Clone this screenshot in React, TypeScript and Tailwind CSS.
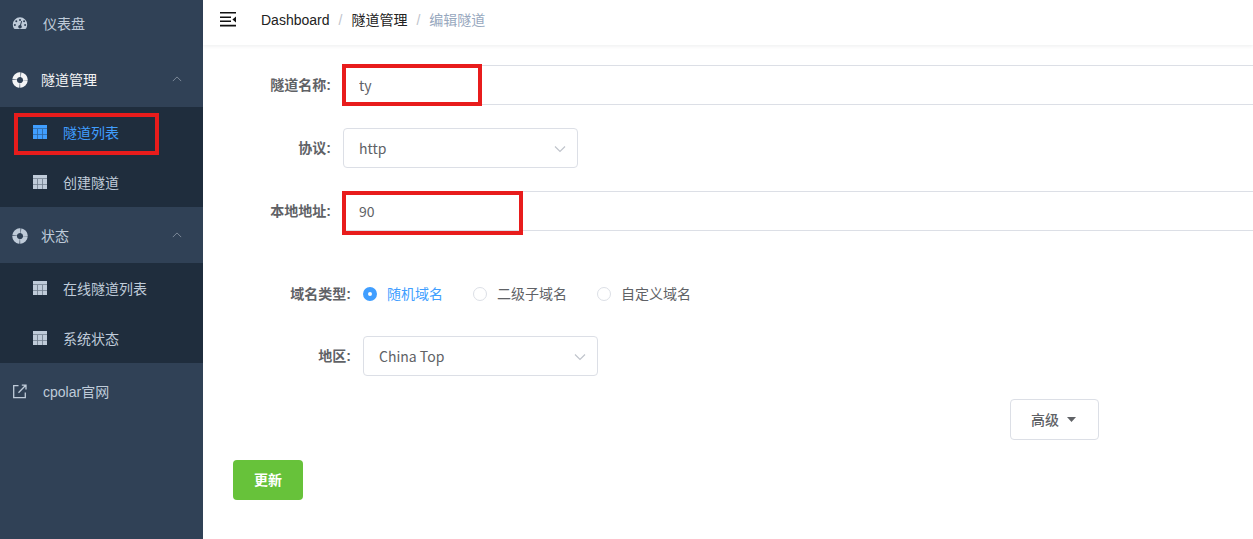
import React, { useState } from 'react';

const DashboardIcon = () => (
  <svg className="w-4 h-4 shrink-0" viewBox="0 0 16 16" fill="currentColor">
    <path
      fillRule="evenodd"
      d="M8 1.300A7.200 7.200 0 0 0 .8 8.500c0 1.500.4 2.900 1.100 4.100.2.300.5.500.9.500h10.400c.4 0 .7-.2.9-.5.7-1.200 1.100-2.600 1.100-4.100A7.200 7.200 0 0 0 8 1.300ZM8 2.900a1 1 0 1 1 0 2 1 1 0 0 1 0-2ZM4.300 4.300a1 1 0 1 1 0 2 1 1 0 0 1 0-2ZM2.900 7.900a1 1 0 1 1 0 2 1 1 0 0 1 0-2Zm10.200 0a1 1 0 1 1 0 2 1 1 0 0 1 0-2Zm-3.900-2.900.9.300-1.100 3.900a1.800 1.800 0 1 1-1-.3l1.200-3.900Zm2.900-.7a1 1 0 1 1 0 2 1 1 0 0 1 0-2Z"
    />
  </svg>
);

const RingIcon = () => (
  <svg className="w-4 h-4 shrink-0" viewBox="0 0 16 16" fill="none" stroke="currentColor">
    <circle cx="8" cy="8" r="5.4" strokeWidth="4.6" strokeDasharray="7.580 0.9" strokeDashoffset="-0.45" />
    <circle cx="8" cy="8" r="5.4" strokeWidth="4.6" opacity="0.35" />
  </svg>
);

const TableIcon = () => (
  <svg className="w-[14px] h-[14px] shrink-0" viewBox="0 0 14 14" fill="currentColor">
    <path d="M0 0h14v3.300H0zM0 4h4.200v5H0zM5 4h4v5H5zM9.800 4H14v5H9.800zM0 9.700h4.200V14H0zM5 9.700h4V14H5zM9.800 9.700H14V14H9.800z" />
    <path d="M0 0h14v14H0z" opacity="0.5" />
  </svg>
);

const LinkIcon = () => (
  <svg className="w-4 h-4 shrink-0" viewBox="0 0 16 16" fill="none" stroke="currentColor" strokeWidth="1.300">
    <path d="M6.500 1.700H1.700v11.900h11.600V8.500M6.500 8.700l7-7.200M9.800 1.200h4.200v4.400" />
  </svg>
);

const FoldIcon = () => (
  <svg className="w-4 h-4" viewBox="0 0 16 16" fill="#111111">
    <path d="M0 0h16v1.600H0zM0 4.400h11v1.500H0zM0 8.600h11v1.500H0zM0 12.800h16v1.600H0zM16 4.600v6l-3.600-3z" />
  </svg>
);

const Chevron = ({ className }: { className: string }) => (
  <svg className={className} viewBox="0 0 12 12" fill="none" stroke="currentColor" strokeWidth="1.200">
    <path d="M1 3.500l5 5 5-5" />
  </svg>
);

// Red marker frame drawn over a field or a menu item
const Marker = ({ className }: { className: string }) => (
  <span className={`absolute border-4 border-[#e81c1c] pointer-events-none ${className}`} />
);

interface SubMenuProps {
  title: string;
  active?: boolean;
  items: string[];
  current?: string;
}

const SubMenu: React.FC<SubMenuProps> = ({ title, active, items, current }) => {
  const [open, setOpen] = useState(true);

  return (
    <li>
      <button
        type="button"
        aria-expanded={open}
        onClick={() => setOpen(!open)}
        className={`flex items-center w-full h-14 pt-[2px] pl-3 pr-[21px] text-left ${active ? 'text-[#f4f4f5]' : ''}`}
      >
        <RingIcon />
        <span className="ml-[13px] flex-1">{title}</span>
        <Chevron className="w-[10px] h-[10px] mb-[2px] rotate-180 text-[#7c8897]" />
      </button>
      {open && (
        <ul className="bg-[#1f2d3d]">
          {items.map((item) => (
            <li key={item} className="relative">
              <a
                href="#"
                className={`flex items-center h-[50px] pl-[33px] ${item === current ? 'text-[#409eff]' : ''}`}
              >
                <TableIcon />
                <span className="ml-4 pt-[2px]">{item}</span>
              </a>
              {item === current && <Marker className="left-[14px] top-[6px] w-[145px] h-[42px]" />}
            </li>
          ))}
        </ul>
      )}
    </li>
  );
};

interface FieldProps {
  label: string;
  id: string;
  children: React.ReactNode;
}

const Field: React.FC<FieldProps> = ({ label, id, children }) => (
  <div className="flex items-center">
    <label htmlFor={id} className="w-[110px] shrink-0 pr-3 text-right font-bold">
      {label}
    </label>
    {children}
  </div>
);

const Select = ({ id, options }: { id: string; options: string[] }) => (
  <div className="relative w-[235px]">
    <select
      id={id}
      className="appearance-none w-full h-10 pl-[15px] pr-8 rounded border border-[#dcdfe6] bg-white font-['Noto_Sans_CJK_SC',sans-serif]"
    >
      {options.map((option) => (
        <option key={option}>{option}</option>
      ))}
    </select>
    <Chevron className="absolute right-3 top-[15px] w-3 h-3 text-[#c0c4cc] pointer-events-none" />
  </div>
);

const DOMAIN_TYPES = ['随机域名', '二级子域名', '自定义域名'];

const App = () => {
  const [domainType, setDomainType] = useState(DOMAIN_TYPES[0]);
  const inputClass =
    "w-full h-10 pl-[15px] rounded-l border border-r-0 border-[#dcdfe6] outline-none font-['Noto_Sans_CJK_SC',sans-serif]";

  return (
    <div className="flex min-h-screen bg-white text-sm text-[#606266] font-['Liberation_Sans','Noto_Sans_CJK_SC',sans-serif]">
      <nav className="w-[203px] shrink-0 bg-[#304156] text-[#bfcbd9]">
        <ul>
          <li>
            <a href="#" className="flex items-center h-[51px] pl-3 pb-1">
              <DashboardIcon />
              <span className="ml-[15px]">仪表盘</span>
            </a>
          </li>
          <SubMenu title="隧道管理" active items={['隧道列表', '创建隧道']} current="隧道列表" />
          <SubMenu title="状态" items={['在线隧道列表', '系统状态']} />
          <li>
            <a href="#" className="flex items-center h-14 pt-[2px] pl-3">
              <LinkIcon />
              <span className="ml-[15px]">cpolar官网</span>
            </a>
          </li>
        </ul>
      </nav>

      <main className="flex-1 min-w-0">
        <header className="flex items-center h-[45px] pl-[17px] pb-[6px] shadow-[0_1px_4px_rgba(0,21,41,0.08)]">
          <button type="button" aria-label="Toggle sidebar">
            <FoldIcon />
          </button>
          <nav className="flex ml-[25px]">
            <a href="#" className="text-[#222222]">Dashboard</a>
            <span className="mx-[9px] text-[#c0c4cc]">/</span>
            <a href="#" className="text-[#222222]">隧道管理</a>
            <span className="mx-[9px] text-[#c0c4cc]">/</span>
            <span className="text-[#97a8be]">编辑隧道</span>
          </nav>
        </header>

        <form className="pl-[30px] pt-5" onSubmit={(e) => e.preventDefault()}>
          <div className="flex flex-col gap-[23px]">
            <Field label="隧道名称:" id="name">
              <div className="relative flex-1">
                <input id="name" defaultValue="ty" className={inputClass} />
                <Marker className="-left-px -top-px w-[140px] h-[42px]" />
              </div>
            </Field>
            <Field label="协议:" id="protocol">
              <Select id="protocol" options={['http', 'https', 'tcp']} />
            </Field>
            <Field label="本地地址:" id="address">
              <div className="relative flex-1">
                <input id="address" defaultValue="90" className={inputClass} />
                <Marker className="-left-px top-0 w-[181px] h-[44px]" />
              </div>
            </Field>
          </div>

          <div className="flex flex-col gap-[22px] mt-[43px] pl-5">
            <div role="radiogroup" aria-labelledby="domain" className="flex items-center h-10">
              <span id="domain" className="w-[110px] shrink-0 pr-3 text-right font-bold">域名类型:</span>
              <div className="flex gap-[30px]">
                {DOMAIN_TYPES.map((type) => (
                  <label key={type} className="flex items-center gap-[10px]">
                    <input
                      type="radio"
                      name="domain"
                      checked={domainType === type}
                      onChange={() => setDomainType(type)}
                      className="peer appearance-none w-[14px] h-[14px] rounded-full border border-[#dcdfe6] bg-white checked:border-[5px] checked:border-[#409eff]"
                    />
                    <span className="peer-checked:text-[#409eff]">{type}</span>
                  </label>
                ))}
              </div>
            </div>
            <Field label="地区:" id="region">
              <Select id="region" options={['China Top', 'China VIP']} />
            </Field>
          </div>

          <div className="flex justify-end mt-[23px] pr-[154px]">
            <button type="button" className="flex items-center h-[41px] px-5 rounded border border-[#dcdfe6] font-medium">
              高级
              <svg className="w-[9px] h-[5px] ml-2 mr-[2px]" viewBox="0 0 9 5" fill="currentColor">
                <path d="M0 0h9L4.500 5z" />
              </svg>
            </button>
          </div>
          <button type="submit" className="block h-10 mt-5 px-[21px] rounded bg-[#67c23a] text-white font-bold">
            更新
          </button>
        </form>
      </main>
    </div>
  );
};

export default App;
